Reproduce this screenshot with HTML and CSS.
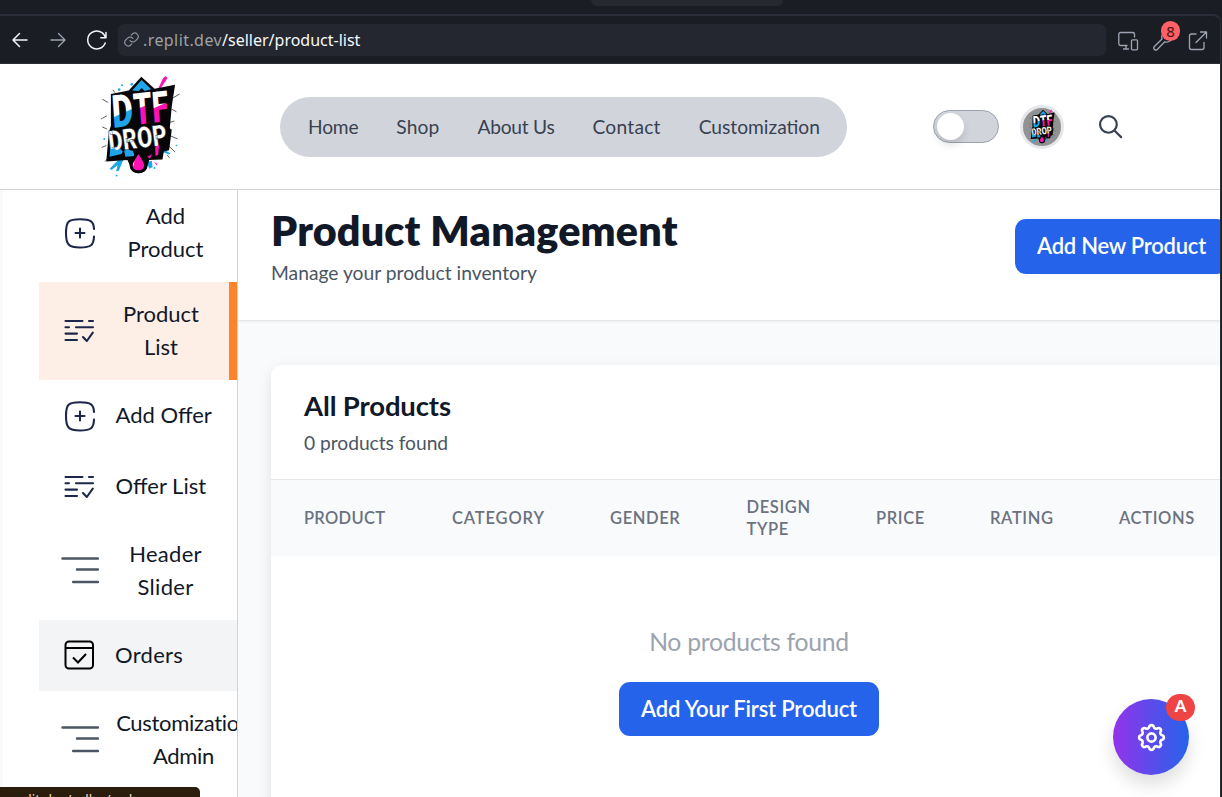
FILE: index.html
```html
<!DOCTYPE html>
<html lang="en">
<head>
<meta charset="utf-8">
<title>Product Management</title>
<link rel="stylesheet" href="styles.css">
</head>
<body>
<svg class="defs" aria-hidden="true">
  <linearGradient id="g-blue" x1="0" y1="0" x2=".12" y2="1"><stop offset=".58" stop-color="#fff"/><stop offset=".6" stop-color="#21a5ea"/></linearGradient>
  <linearGradient id="g-pink" x1="0" y1="0" x2=".1" y2="1"><stop offset=".5" stop-color="#fff"/><stop offset=".52" stop-color="#ff12b4"/></linearGradient>
  <symbol id="logo" viewBox="50 25 260 315">
    <g fill="#1fa9e8">
      <circle cx="126" cy="58" r="3"/><circle cx="117" cy="71" r="4"/><circle cx="155" cy="55" r="4"/><circle cx="109" cy="331" r="3"/><circle cx="224" cy="308" r="3"/><circle cx="72" cy="220" r="3"/><circle cx="290" cy="240" r="2.500"/>
      <path d="M120 278l-32 32 6 4 18-14-4 18 8-2 14-34zM200 290l16-4 2 20-10 4zM250 250l22 14-4 3-22-8z"/>
    </g>
    <path fill="#ff12b4" d="M236 66l14-30 8-6 5 6-6 10-18 26zM222 290l12 6-4 3z"/>
    <path stroke="#111" stroke-width="2" fill="none" d="M84 110l-18-10M80 150l-18 10M80 190l-14-6M78 240l-14 6M84 278l-10 10M280 96l20-12M276 130l14 8M270 170l14-4M270 210l24 10M266 240l20 20M262 268l8 10M104 80l-6-8"/>
    <path fill="#060608" d="M92 84l54-10 38-42 40 36 62-12-10 66-6 66 6 4-8 62-16 4-4 24-40 2-6 22c-6 24-46 24-50 0l-10-22-64 4 8-90 4-12 2-6z"/>
    <path fill="#21a5ea" d="M156 74l29-32 29 28-20 5-9-9-9 9z"/>
    <g class="logo-word">
      <text transform="translate(98 187) rotate(-7) skewX(-3) scale(1.26 1.76)" fill="url(#g-blue)" font-size="78">D</text>
      <text transform="translate(163 178) rotate(-7) skewX(-3) scale(1.14 1.7)" fill="url(#g-pink)" font-size="78">T</text>
      <text transform="translate(219 171) rotate(-7) skewX(-3) scale(1.16 1.66)" fill="url(#g-pink)" font-size="78">F</text>
      <text transform="translate(88 259) rotate(-7) scale(.99 1.3)" fill="#fff" stroke="#060608" stroke-width="1" font-size="68">DROP</text>
    </g>
    <path fill="#21a5ea" d="M90 252l12-4 8 6 10-4 8 8-4 8-36 8zM132 256l10-4 16 4 6 16-28 2z"/>
    <path fill="#ff12b4" d="M226 244l12-6-3 30-8 4zM202 274l14-8-6 14z"/>
    <path fill="#ff12b4" stroke="#060608" stroke-width="9" d="M175 256c6 14 22 30 22 44 0 26-44 26-44 0 0-14 16-28 22-44z"/>
    <path fill="#fff" d="M165 286q-6 8-3 16-7-6 3-16z"/>
  </symbol>
  <symbol id="i-add" viewBox="0 0 32 32">
    <path d="M30 19.500c-.3 8.700-3 11-14 11C4.300 30.500 2 27.500 2 16S4.300 2.300 16 2.300c11 0 13.700 2.400 14 9.700M16 11.500v9M11.500 16h9" fill="none" stroke="#1c274c" stroke-width="2.100" stroke-linecap="round"/>
  </symbol>
  <symbol id="i-list" viewBox="0 0 32 32">
    <path d="M1.500 6h17M25 6h4M1.500 12.300h3.500M12 12.300H29M1.500 18.600h11.500M1.500 25h11.500M19 22l3.800 4 6-8.300" fill="none" stroke="#1c274c" stroke-width="2.100" stroke-linecap="round" stroke-linejoin="round"/>
  </symbol>
  <symbol id="i-menu" viewBox="0 0 38 38">
    <path d="M1.500 6.500h35.500M16 17.500h21M12.200 30h24.800" fill="none" stroke="#4b5563" stroke-width="2.500" stroke-linecap="round"/>
  </symbol>
  <symbol id="i-orders" viewBox="0 0 32 32">
    <path d="M2 8h27" stroke="#000" stroke-width="2"/><rect x="1.500" y="1.500" width="27.500" height="27" rx="3.500" fill="none" stroke="#000" stroke-width="2"/><path d="M9 17.500l5 5 8-8.500" fill="none" stroke="#000" stroke-width="2"/>
  </symbol>
</svg>

<div class="window">
  <div class="tabs"><div class="tab"></div></div>
  <div class="pane">
    <div class="toolbar">
      <svg class="tool" viewBox="0 0 24 24"><path class="bright" d="M19 12H5.500M11.500 5.500L5 12l6.500 6.500"/></svg>
      <svg class="tool" viewBox="0 0 24 24"><path d="M5 12h13.500M12.500 5.500L19 12l-6.500 6.500"/></svg>
      <svg class="tool" viewBox="0 0 24 24"><path class="bright" d="M22 4.500v5.200h-5.200M21.300 9.200A9 9 0 1 0 21.200 15"/></svg>
      <div class="address">
        <svg class="link" viewBox="0 0 24 24"><path d="M10 13.500a5 5 0 0 0 7.500.5l3-3a5 5 0 0 0-7-7l-1.700 1.700M14 10.500a5 5 0 0 0-7.500-.5l-3 3a5 5 0 0 0 7 7l1.700-1.700"/></svg>
        <span class="host">.replit.dev</span><span class="path">/seller/product-list</span>
      </div>
      <div class="actions">
        <svg class="tool" viewBox="0 0 24 24"><path d="M11 16.500H4.500a1.700 1.700 0 0 1-1.700-1.700V5.200a1.700 1.700 0 0 1 1.700-1.700h12.300a1.700 1.700 0 0 1 1.700 1.700V8M7.500 20h5M10 16.500V20M16.500 10.800h4a1 1 0 0 1 1 1v8a1 1 0 0 1-1 1h-4a1 1 0 0 1-1-1v-8a1 1 0 0 1 1-1z"/></svg>
        <div class="wrench">
          <svg class="tool" viewBox="0 0 24 24"><path d="M11 10l-7.600 7.600a1.900 1.900 0 0 0 2.800 2.800l7.600-7.600c3 .8 6-.6 7-3.500M11 10c-1-3 .5-6 4-7"/></svg>
          <span class="count">8</span>
        </div>
        <svg class="tool" viewBox="0 0 24 24"><path d="M10 5H5.500A2 2 0 0 0 3.500 7v11.500a2 2 0 0 0 2 2H16a2 2 0 0 0 2-2V13.500M14.500 3h6v6M20.500 3L10 13.500"/></svg>
      </div>
    </div>

    <div class="page">
      <header class="header">
        <svg class="logo"><use href="#logo"/></svg>
        <nav class="nav"><a class="n1">Home</a><a class="n2">Shop</a><a class="n3">About Us</a><a class="n4">Contact</a><a class="n5">Customization</a></nav>
        <div class="toggle"><span class="knob"></span></div>
        <div class="avatar"><svg><use href="#logo"/></svg></div>
        <svg class="search" viewBox="0 0 24 24"><circle cx="10" cy="10" r="8"/><path d="M16 16l6.200 6.200"/></svg>
      </header>

      <div class="body">
        <aside class="sidebar">
          <ul class="menu">
            <li><svg><use href="#i-add"/></svg><span>Add Product</span></li>
            <li class="active"><svg><use href="#i-list"/></svg><span>Product List</span></li>
            <li><svg><use href="#i-add"/></svg><span>Add Offer</span></li>
            <li><svg><use href="#i-list"/></svg><span>Offer List</span></li>
            <li><svg class="wide"><use href="#i-menu"/></svg><span class="open">Header Slider</span></li>
            <li class="hover"><svg><use href="#i-orders"/></svg><span class="open left">Orders</span></li>
            <li><svg class="wide"><use href="#i-menu"/></svg><span class="tight">Customization Admin</span></li>
          </ul>
        </aside>
        <main class="main">
          <section class="title-bar">
            <div>
              <h1>Product Management</h1>
              <p>Manage your product inventory</p>
            </div>
            <button class="btn">Add New Product</button>
          </section>
          <section class="card">
            <div class="card-head">
              <h2>All Products</h2>
              <p>0 products found</p>
            </div>
            <div class="columns">
              <span class="c1">Product</span><span class="c2">Category</span><span>Gender</span><span>Design<br>Type</span><span>Price</span><span>Rating</span><span>Actions</span>
            </div>
            <div class="empty">
              <p>No products found</p>
              <button class="btn first">Add Your First Product</button>
            </div>
          </section>
        </main>
      </div>
    </div>
  </div>
  <div class="status">replit.dev/seller/orders</div>
  <div class="fab">
    <svg viewBox="0 0 24 24"><path d="M10.325 4.317c.426-1.756 2.924-1.756 3.350 0a1.724 1.724 0 0 0 2.573 1.066c1.543-.94 3.310.826 2.370 2.370a1.724 1.724 0 0 0 1.065 2.572c1.756.426 1.756 2.924 0 3.350a1.724 1.724 0 0 0-1.066 2.573c.94 1.543-.826 3.310-2.370 2.370a1.724 1.724 0 0 0-2.572 1.065c-.426 1.756-2.924 1.756-3.350 0a1.724 1.724 0 0 0-2.573-1.066c-1.543.94-3.310-.826-2.370-2.370a1.724 1.724 0 0 0-1.065-2.572c-1.756-.426-1.756-2.924 0-3.350a1.724 1.724 0 0 0 1.066-2.573c-.94-1.543.826-3.310 2.370-2.370.996.608 2.296.070 2.572-1.065z"/><circle cx="12" cy="12" r="3"/></svg>
    <span class="fab-badge">A</span>
  </div>
</div>
</body>
</html>
```
FILE: styles.css
```css
* { box-sizing: border-box; margin: 0; padding: 0; }
body { font-family: Lato, "Open Sans", sans-serif; background: #1b1d25; overflow: hidden; }
.defs { position: absolute; width: 0; height: 0; }
.window { position: relative; width: 1222px; height: 797px; overflow: hidden; display: flex; flex-direction: column; }
.tabs { height: 14px; flex: none; padding-left: 591px; }
.tab { width: 192px; height: 6px; background: #262932; border-radius: 0 0 6px 6px; }
.pane { flex: 1; min-height: 0; margin-right: 1px; border: solid #2b2e38; border-width: 2px 1px 0 0; border-top-right-radius: 8px; display: flex; flex-direction: column; }

/* browser toolbar */
.toolbar { height: 48px; flex: none; display: flex; align-items: center; padding: 0 0 0 8px; border-bottom: 1px solid #2b2e38; }
.tool { width: 24px; height: 24px; margin-right: 14px; flex: none; }
.tool path, .link path { fill: none; stroke: #9da2b0; stroke-width: 1.350; stroke-linecap: round; stroke-linejoin: round; }
.tool .bright { stroke: #f2f4f7; stroke-width: 1.500; }
.address { height: 32px; width: 988px; flex: none; margin-left: -4px; background: #24272f; border-radius: 6px; display: flex; align-items: center; padding-left: 5px; font: 16px/32px "Noto Sans", sans-serif; }
.link { width: 17px; height: 17px; margin-right: 3px; }
.link path { stroke-width: 1.700; stroke: #8d92a0; }
.host { color: #9da2a6; letter-spacing: .42px; }
.path { color: #f5f9fc; }
.actions { display: flex; margin: 2px 0 0 10px; }
.actions .tool { display: block; margin-right: 11px; }
.wrench { position: relative; }
.count { position: absolute; left: 10px; top: -8px; width: 19px; height: 20px; border-radius: 10px; background: #ff6166; color: #4a1013; font: 15px/21px "Noto Sans", sans-serif; text-align: center; }

/* page */
.page { flex: 1; min-height: 0; background: #fff; display: flex; flex-direction: column; }
.header { height: 126px; flex: none; border-bottom: 1px solid #d1d5db; display: flex; align-items: center; padding-left: 97px; }
.logo { width: 86px; height: 105px; flex: none; }
.logo-word { font-family: Roboto, sans-serif; font-weight: 900; }
.nav { margin-left: 97px; width: 567px; height: 60px; border-radius: 30px; background: #d1d5db; display: flex; align-items: center; justify-content: space-between; padding: 0 27px 1px 28px; font-size: 19.200px; color: #374151; }
.n1 { letter-spacing: -.2px; }
.n2 { letter-spacing: .14px; }
.n3 { letter-spacing: -.25px; }
.n4 { letter-spacing: .24px; }
.toggle { width: 66px; height: 33px; margin-left: 86px; border: 1px solid #9ca3af; border-radius: 17px; background: #d1d5db; padding: 2px 3px; }
.knob { display: block; width: 27px; height: 27px; border-radius: 50%; background: #fff; box-shadow: 0 5px 8px rgba(0,0,0,.12); }
.avatar { width: 44px; height: 44px; margin-left: 21px; border: 3px solid #e5e7eb; border-radius: 50%; background: #929292; display: flex; align-items: center; justify-content: center; }
.avatar svg { width: 31px; height: 36px; flex: none; }
.search { width: 25px; height: 25px; margin-left: 34px; fill: none; stroke: #374151; stroke-width: 2.100; stroke-linecap: round; }

.body { flex: 1; min-height: 0; display: flex; }
.sidebar { width: 238px; flex: none; border-right: 1px solid #d1d5db; border-left: 3px solid #fafafa; overflow: hidden; padding-left: 36px; }
.menu { list-style: none; margin-top: -6px; font-size: 22px; line-height: 33px; color: #111827; }
.menu li { display: flex; align-items: center; padding: 15px 22px 17px; text-align: center; min-height: 71px; }
.menu svg { width: 32px; height: 32px; margin: 2px 20px 0 3px; flex: none; overflow: visible; }
.menu svg.wide { width: 38px; height: 38px; margin: 2px 17px 0 0; overflow: hidden; }
.menu span { flex: 1 0 auto; width: 98px; letter-spacing: 0; }
.menu li:nth-child(3) span, .menu li:nth-child(4) span { flex: none; width: auto; margin-left: -.5px; white-space: nowrap; }
.menu .active { background: #fdeee6; border-right: 8px solid #fb842d; }
.menu .active span { flex: none; width: 90px; }
.menu .hover { background: #f3f4f6; }
.menu .open { letter-spacing: .3px; }
.menu .left { text-align: left; margin-left: -1px; }
.menu .tight { letter-spacing: -.3px; flex: none; width: 137px; margin-left: -1px; }

.main { flex: 1; min-width: 0; background: #f9fafb; overflow: hidden; display: flex; flex-direction: column; }
.title-bar { height: 131px; flex: none; width: 1023px; background: #fff; border-bottom: 1px solid #e5e7eb; box-shadow: 0 1px 2px rgba(0,0,0,.05); display: flex; justify-content: space-between; align-items: flex-start; padding: 15px 33px 0; }
h1 { font-size: 41.250px; line-height: 50px; font-weight: 800; letter-spacing: .17px; color: #111827; }
.title-bar p { font-size: 19.250px; line-height: 28px; margin-top: 4px; color: #4b5563; }
.btn { height: 55px; width: 213px; margin-top: 14px; padding-bottom: 2px; border: 0; border-radius: 11px; background: #2563eb; color: #fff; font: 600 22px/33px Lato, sans-serif; letter-spacing: -.25px; white-space: nowrap; }
.card { flex: 1 0 auto; width: 956px; margin: 44px 0 -20px 33px; background: #fff; border-radius: 11px; box-shadow: 0 4px 14px rgba(0,0,0,.1); }
.card-head { height: 115px; border-bottom: 1px solid #e5e7eb; padding: 23px 33px; }
h2 { font-size: 27.500px; line-height: 36px; font-weight: 700; letter-spacing: -.14px; color: #111827; }
.card-head p { font-size: 19.250px; line-height: 28px; margin-top: 5px; letter-spacing: -.05px; color: #4b5563; }
.columns { height: 76px; background: #f9fafb; display: grid; grid-template-columns: 148px 158px 136.500px 129.500px 114px 129px auto; align-items: center; padding-left: 33px; font-size: 16.500px; line-height: 22px; font-weight: 600; letter-spacing: .62px; color: #6b7280; text-transform: uppercase; }
.columns .c1 { letter-spacing: .3px; }
.columns .c2 { letter-spacing: .85px; }
.empty { display: flex; flex-direction: column; align-items: center; padding-top: 68px; }
.empty p { font-size: 24.750px; line-height: 35px; letter-spacing: -.28px; color: #9ca3af; }
.btn.first { width: 260px; height: 54px; margin-top: 23px; letter-spacing: -.18px; }

/* overlays */
.status { position: absolute; left: 0; top: 787px; width: 200px; height: 24px; border-radius: 0 5px 0 0; background: #2b1c0b; color: #f3dfc0; font: 13.500px/17px "Noto Sans", sans-serif; padding: 5px 0 0 7px; letter-spacing: 0; }
.fab { position: absolute; left: 1113px; top: 699px; width: 76px; height: 76px; border-radius: 50%; background: linear-gradient(90deg, #9333ea, #2563eb); box-shadow: 0 10px 18px rgba(0,0,0,.13); display: flex; align-items: center; justify-content: center; }
.fab svg { width: 33px; height: 33px; fill: none; stroke: #fff; stroke-width: 1.900; stroke-linejoin: round; }
.fab-badge { position: absolute; left: 53px; top: -5px; width: 29px; height: 27px; border-radius: 14px; background: #ef4444; color: #fff; font-size: 16.500px; font-weight: 900; line-height: 25px; text-align: center; }
```
